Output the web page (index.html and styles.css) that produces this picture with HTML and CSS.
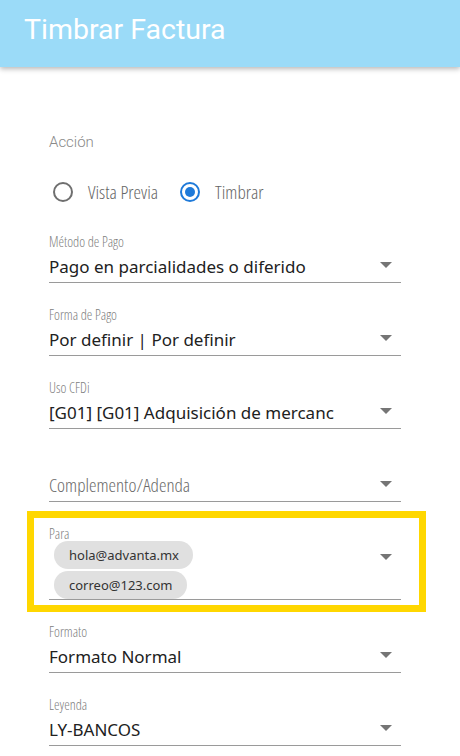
FILE: index.html
```html
<!DOCTYPE html>
<html lang="es">
<head>
<meta charset="utf-8">
<title>Timbrar Factura</title>
<link rel="stylesheet" href="styles.css">
</head>
<body>
<header class="appbar">
  <h1 class="title">Timbrar Factura</h1>
</header>
<main class="content">
  <div class="group-label">Acción</div>
  <div class="radio-row">
    <label class="radio">
      <span class="radio-circle"></span>
      <span class="radio-text">Vista Previa</span>
    </label>
    <label class="radio checked">
      <span class="radio-circle"><span class="radio-dot"></span></span>
      <span class="radio-text">Timbrar</span>
    </label>
  </div>

  <div class="field">
    <div class="field-label">Método de Pago</div>
    <div class="control">
      <span class="value">Pago en parcialidades o diferido</span>
      <span class="arrow"></span>
    </div>
  </div>

  <div class="field">
    <div class="field-label">Forma de Pago</div>
    <div class="control">
      <span class="value">Por definir | Por definir</span>
      <span class="arrow"></span>
    </div>
  </div>

  <div class="field">
    <div class="field-label">Uso CFDi</div>
    <div class="control">
      <span class="value">[G01] [G01] Adquisición de mercanc</span>
      <span class="arrow"></span>
    </div>
  </div>

  <div class="field">
    <div class="field-label"></div>
    <div class="control">
      <span class="placeholder">Complemento/Adenda</span>
      <span class="arrow"></span>
    </div>
  </div>

  <div class="field field-highlight">
    <div class="field-label">Para</div>
    <div class="control control-chips">
      <div class="chips">
        <span class="chip">hola@advanta.mx</span>
        <span class="chip">correo@123.com</span>
      </div>
      <span class="arrow arrow-top"></span>
    </div>
    <div class="highlight-box"></div>
  </div>

  <div class="field">
    <div class="field-label">Formato</div>
    <div class="control">
      <span class="value">Formato Normal</span>
      <span class="arrow"></span>
    </div>
  </div>

  <div class="field">
    <div class="field-label">Leyenda</div>
    <div class="control">
      <span class="value">LY-BANCOS</span>
      <span class="arrow"></span>
    </div>
  </div>
</main>
</body>
</html>
```

FILE: styles.css
```css
* { box-sizing: border-box; }

html, body {
  margin: 0;
  padding: 0;
  background: #ffffff;
}

body {
  width: 460px;
  height: 756px;
  overflow: hidden;
  font-family: "Noto Sans", "Open Sans", sans-serif;
  color: #212121;
}

.appbar {
  height: 67px;
  background: #9bdbf8;
  padding: 15px 0 0 24px;
  box-shadow: 0 2px 5px rgba(0, 0, 0, 0.28);
  position: relative;
  z-index: 1;
}

.title {
  margin: 0;
  font-family: Roboto, sans-serif;
  font-weight: 400;
  font-size: 28.5px;
  line-height: 30px;
  color: #ffffff;
}

.content {
  padding: 67px 59px 0 49px;
}

.group-label {
  font-family: Roboto, sans-serif;
  font-weight: 300;
  font-size: 15px;
  line-height: 16px;
  color: #8a8a8a;
}

.radio-row {
  display: flex;
  align-items: center;
  height: 40px;
  margin-top: 22px;
  margin-left: 4px;
}

.radio {
  display: flex;
  align-items: center;
  gap: 15px;
  margin-right: 22px;
}

.radio-circle {
  width: 20px;
  height: 20px;
  border: 2px solid #6f6f6f;
  border-radius: 50%;
  display: flex;
  align-items: center;
  justify-content: center;
}

.radio.checked .radio-circle {
  border-color: #1f7ad9;
}

.radio-dot {
  width: 10px;
  height: 10px;
  border-radius: 50%;
  background: #1f7ad9;
}

.radio-text {
  font-family: "Open Sans", sans-serif;
  font-stretch: condensed;
  font-weight: 300;
  font-size: 19px;
  color: #666666;
}

.field {
  margin-top: 22px;
  position: relative;
}

.field + .field {
  margin-top: 24px;
}

.field-label {
  height: 16px;
  font-family: "Open Sans", sans-serif;
  font-stretch: condensed;
  font-weight: 300;
  font-size: 14px;
  line-height: 16px;
  color: #808080;
}

.control {
  height: 33px;
  border-bottom: 1px solid #9a9a9a;
  display: flex;
  align-items: center;
  justify-content: space-between;
  padding-right: 9px;
}

.value {
  font-size: 17px;
  color: #212121;
  white-space: nowrap;
}

.placeholder {
  font-family: "Open Sans", sans-serif;
  font-stretch: condensed;
  font-weight: 300;
  font-size: 19px;
  color: #6a6a6a;
}

.arrow {
  width: 0;
  height: 0;
  border-left: 6px solid transparent;
  border-right: 6px solid transparent;
  border-top: 6px solid #757575;
  margin-top: -3px;
}

.control-chips {
  height: auto;
  align-items: flex-start;
  padding-left: 5px;
}

.chips {
  display: flex;
  flex-direction: column;
  align-items: flex-start;
  gap: 2px;
  margin-top: -1px;
}

.chip {
  height: 28px;
  line-height: 28px;
  padding: 0 14px 0 15px;
  border-radius: 14px;
  background: #e0e0e0;
  font-size: 13px;
  color: #333333;
}

.arrow-top {
  margin-top: 12px;
}

.highlight-box {
  position: absolute;
  left: -22px;
  top: -15px;
  width: 399px;
  height: 101px;
  border: 7px solid #ffd700;
  pointer-events: none;
}
```
